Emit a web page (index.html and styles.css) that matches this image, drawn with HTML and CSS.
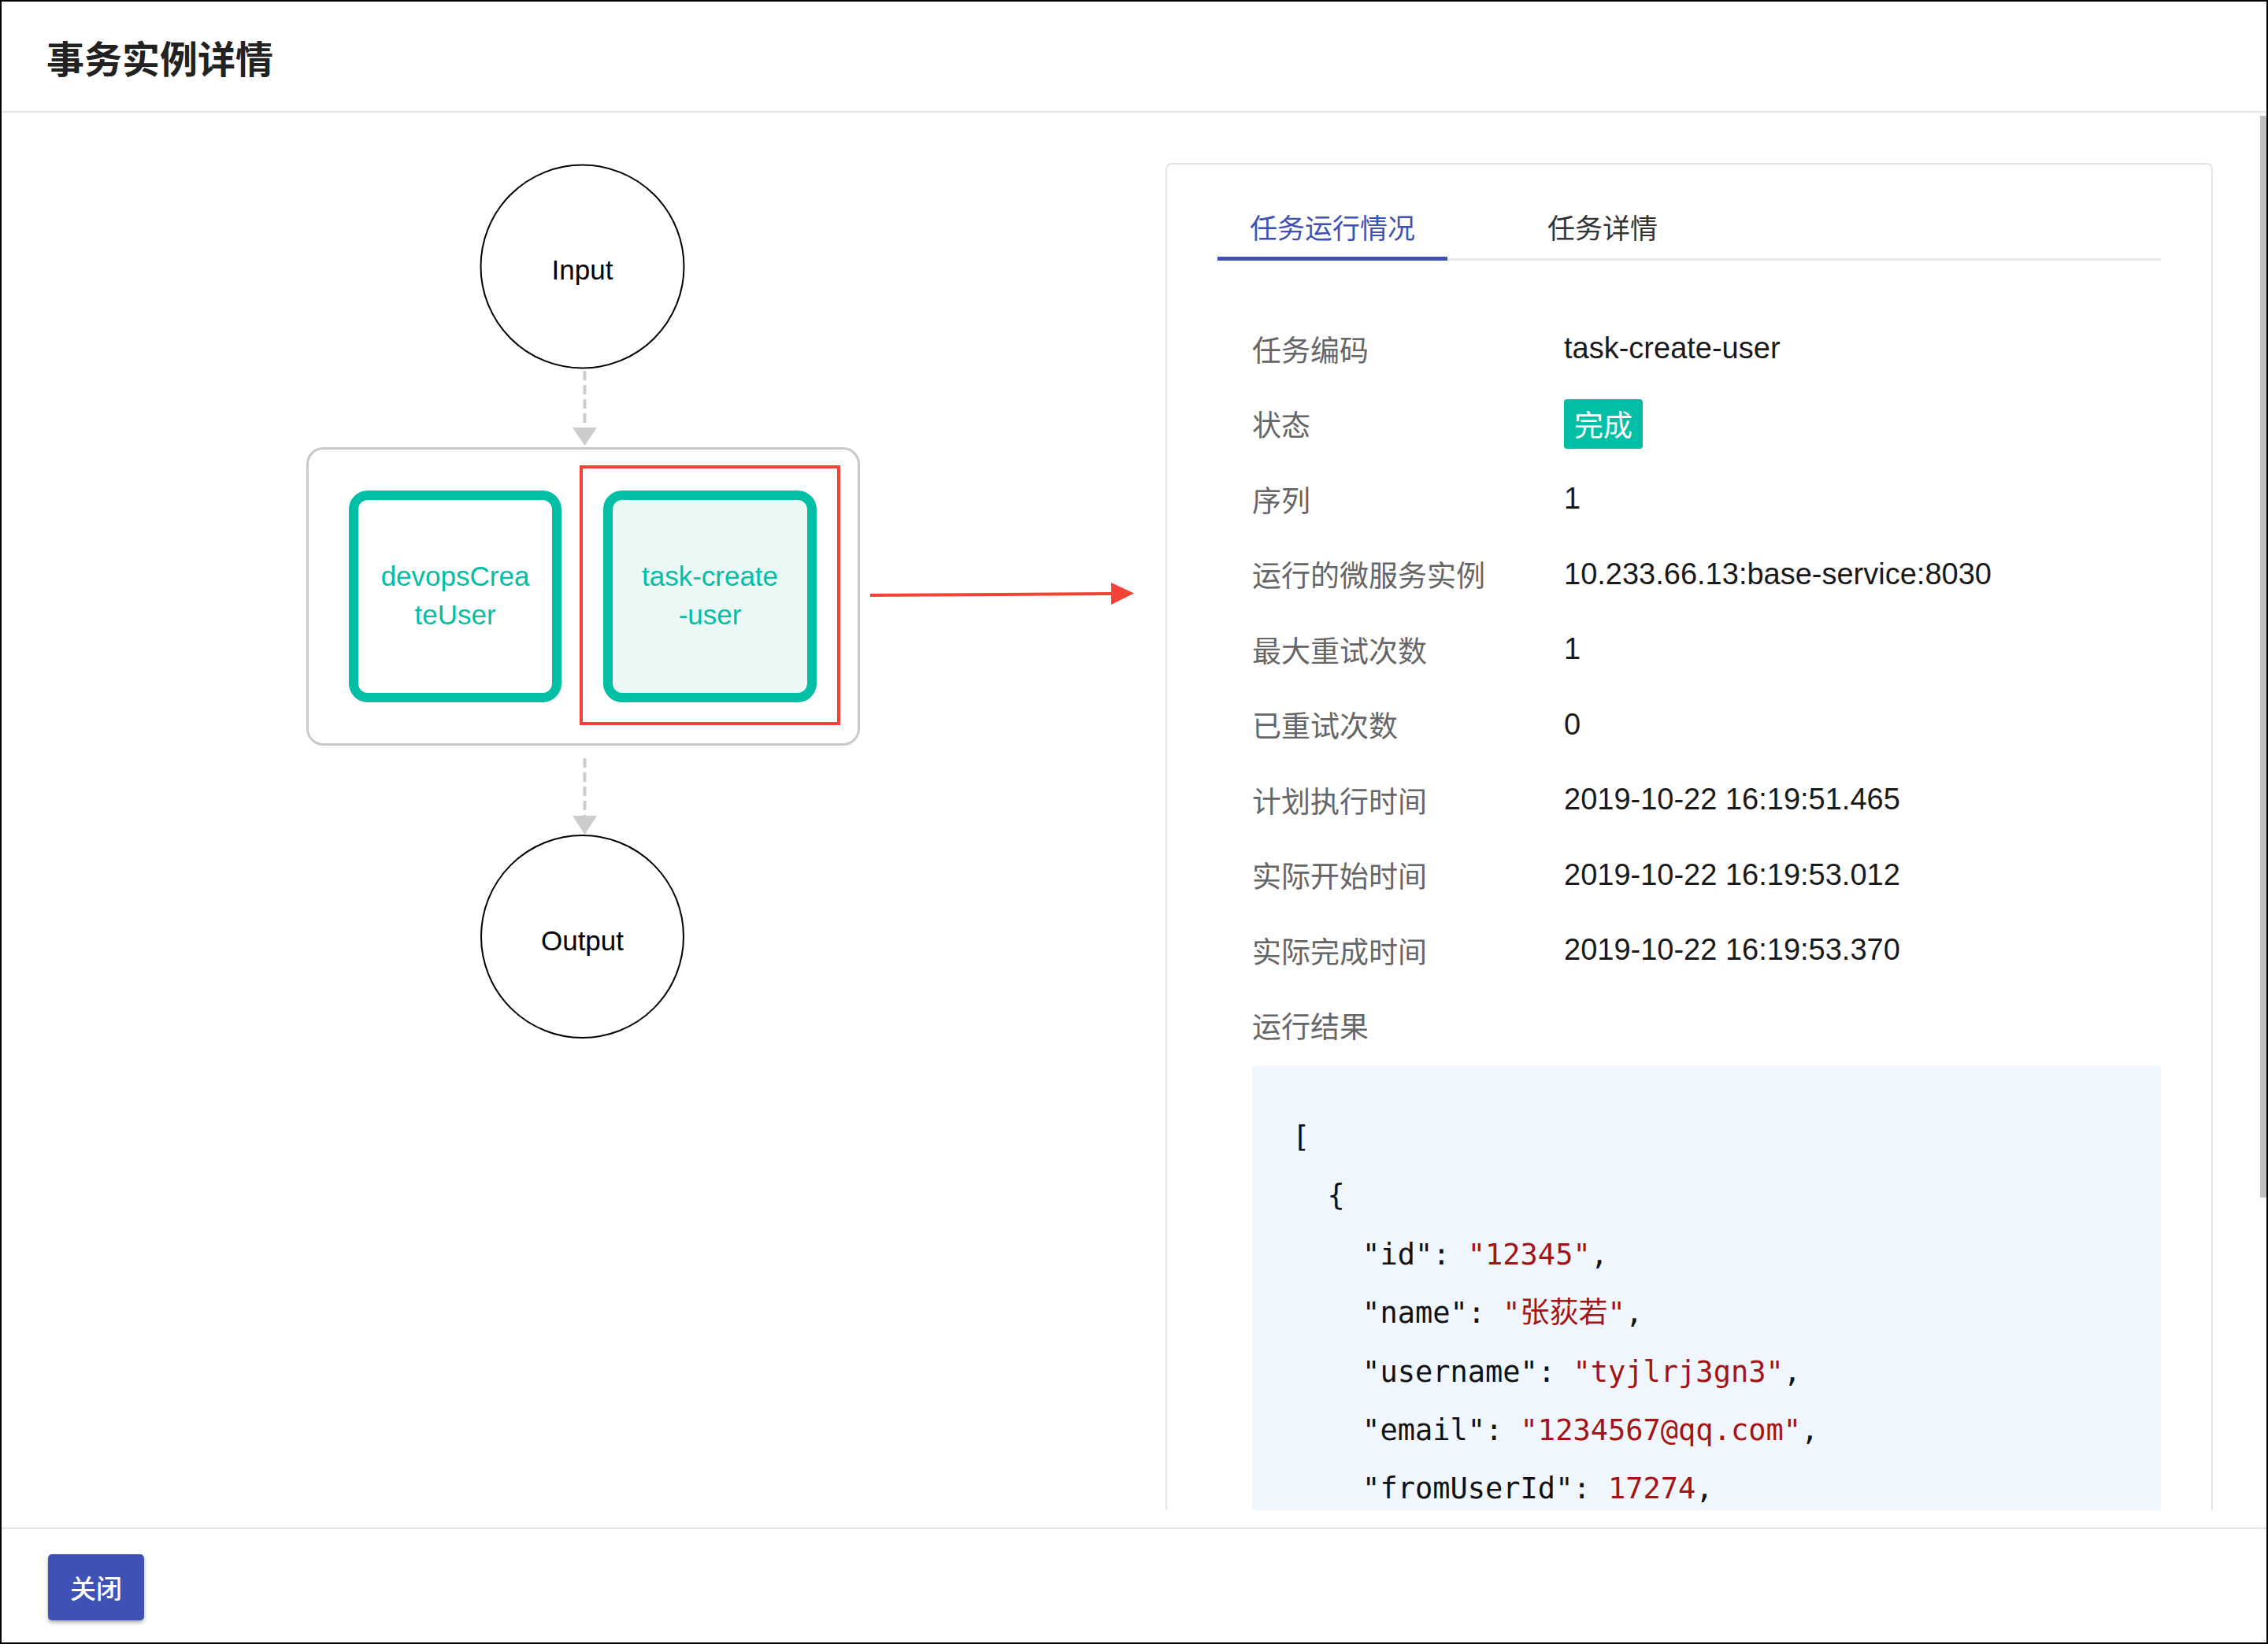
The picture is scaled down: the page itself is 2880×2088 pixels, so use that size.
FILE: index.html
```html
<!DOCTYPE html>
<html lang="zh-CN">
<head>
<meta charset="utf-8">
<title>事务实例详情</title>
<link rel="stylesheet" href="styles.css">
</head>
<body>
<div class="modal">
  <header class="modal-header">
    <h1 class="modal-title">事务实例详情</h1>
  </header>
  <div class="modal-body">
    <div class="viewport">
      <section class="diagram-pane">
        <svg class="diagram" viewBox="2 143 1478 1200" width="1478" height="1200" xmlns="http://www.w3.org/2000/svg">
          <circle cx="739.5" cy="338.5" r="129" fill="#fff" stroke="#000" stroke-width="2"/>
          <text class="io-label" x="739.5" y="355">Input</text>
          <line x1="742.5" y1="471" x2="742.5" y2="544" stroke="#cccccc" stroke-width="4" stroke-dasharray="12 6"/>
          <polygon points="727,543 758,543 742.5,566" fill="#cccccc"/>

          <rect x="390.5" y="569.5" width="700" height="376" rx="20" fill="#fff" stroke="#c9c9c9" stroke-width="3"/>

          <rect x="449" y="629" width="258" height="257" rx="18" fill="#fff" stroke="#00bfa5" stroke-width="12"/>
          <text class="task-label" x="578" y="744">devopsCrea</text>
          <text class="task-label" x="578" y="793">teUser</text>

          <rect x="772" y="629" width="259" height="257" rx="18" fill="#ebf8f5" stroke="#00bfa5" stroke-width="12"/>
          <text class="task-label" x="901.5" y="744">task-create</text>
          <text class="task-label" x="901.5" y="793">-user</text>

          <rect x="738" y="593" width="327" height="326" fill="none" stroke="#f44336" stroke-width="4"/>
          <line x1="1105" y1="756" x2="1414" y2="754" stroke="#f44336" stroke-width="4"/>
          <polygon points="1411,740 1411,768 1440,753.5" fill="#f44336"/>

          <line x1="742.5" y1="963" x2="742.5" y2="1038" stroke="#cccccc" stroke-width="4" stroke-dasharray="12 6"/>
          <polygon points="727,1036 758,1036 742.5,1060" fill="#cccccc"/>
          <circle cx="739.5" cy="1189.5" r="128.5" fill="#fff" stroke="#000" stroke-width="2"/>
          <text class="io-label" x="739.5" y="1207">Output</text>
        </svg>
      </section>

      <section class="task-card">
        <nav class="tabs">
          <div class="tab active">任务运行情况</div>
          <div class="tab">任务详情</div>
        </nav>
        <div class="tab-panel">
          <dl class="info">
            <div class="row"><dt>任务编码</dt><dd>task-create-user</dd></div>
            <div class="row"><dt>状态</dt><dd><span class="badge">完成</span></dd></div>
            <div class="row"><dt>序列</dt><dd>1</dd></div>
            <div class="row"><dt>运行的微服务实例</dt><dd>10.233.66.13:base-service:8030</dd></div>
            <div class="row"><dt>最大重试次数</dt><dd>1</dd></div>
            <div class="row"><dt>已重试次数</dt><dd>0</dd></div>
            <div class="row"><dt>计划执行时间</dt><dd>2019-10-22 16:19:51.465</dd></div>
            <div class="row"><dt>实际开始时间</dt><dd>2019-10-22 16:19:53.012</dd></div>
            <div class="row"><dt>实际完成时间</dt><dd>2019-10-22 16:19:53.370</dd></div>
            <div class="row"><dt>运行结果</dt><dd></dd></div>
          </dl>
<pre class="code">[
  {
    "id": <span class="str">"12345"</span>,
    "name": <span class="str">"张荻若"</span>,
    "username": <span class="str">"tyjlrj3gn3"</span>,
    "email": <span class="str">"1234567@qq.com"</span>,
    "fromUserId": <span class="str">17274</span>,</pre>
        </div>
      </section>
    </div>
    <div class="scroll-thumb"></div>
  </div>
  <footer class="modal-footer">
    <button class="btn-primary" type="button">关闭</button>
  </footer>
</div>
</body>
</html>
```

FILE: styles.css
```css
* {
  box-sizing: border-box;
}

html,
body {
  margin: 0;
  padding: 0;
}

body {
  width: 2880px;
  height: 2088px;
  background: #ffffff;
  font-family: "Noto Sans CJK SC", "Liberation Sans", sans-serif;
  overflow: hidden;
}

.modal {
  width: 2880px;
  height: 2088px;
  border: 2px solid #000000;
  display: flex;
  flex-direction: column;
}

.modal-header {
  flex: none;
  height: 141px;
  border-bottom: 2px solid #e3e3e3;
  display: flex;
  align-items: center;
  padding-left: 57px;
}

.modal-title {
  margin: 0;
  font-size: 48px;
  font-weight: 700;
  line-height: 1;
  color: #222222;
}

.modal-body {
  flex: 1;
  min-height: 0;
  position: relative;
}

.viewport {
  height: 1775px;
  overflow: hidden;
  display: flex;
  align-items: flex-start;
}

.diagram-pane {
  flex: none;
  width: 1478px;
}

.diagram {
  display: block;
}

.io-label {
  font-family: "Liberation Sans", sans-serif;
  font-size: 35px;
  fill: #000000;
  text-anchor: middle;
}

.task-label {
  font-family: "Liberation Sans", sans-serif;
  font-size: 35px;
  fill: #00bfa5;
  text-anchor: middle;
}

.task-card {
  flex: none;
  width: 1330px;
  min-height: 2000px;
  margin-top: 64px;
  border: 2px solid #e4e4e4;
  border-radius: 8px;
  padding: 38px 64px 0 64px;
}

.tabs {
  display: flex;
  gap: 86px;
  border-bottom: 3px solid #e8e8e8;
}

.tab {
  position: relative;
  padding: 0 41px;
  font-size: 35px;
  line-height: 81px;
  color: #333333;
}

.tab.active {
  color: #3f51b5;
}

.tab.active::after {
  content: "";
  position: absolute;
  left: 0;
  right: 0;
  bottom: -3px;
  height: 5px;
  background: #3f51b5;
}

.tab-panel {
  padding: 64px 0 0 44px;
}

.info {
  margin: 0;
}

.row {
  display: grid;
  grid-template-columns: 396px 1fr;
  align-items: center;
  height: 95.5px;
}

.row dt {
  font-size: 37px;
  color: #666666;
}

.row dd {
  margin: 0;
  font-family: "Liberation Sans", "Noto Sans CJK SC", sans-serif;
  font-size: 38px;
  color: #1a1a1a;
}

.badge {
  display: inline-block;
  height: 63px;
  padding: 0 13px;
  border-radius: 4px;
  background: #00bfa5;
  color: #ffffff;
  font-family: "Noto Sans CJK SC", sans-serif;
  font-size: 37px;
  line-height: 63px;
  vertical-align: middle;
}

.code {
  margin: 4px 0 0 0;
  padding: 54px 40px 54px 51px;
  background: #eff6fd;
  font-family: "DejaVu Sans Mono", "Noto Sans CJK SC", monospace;
  font-size: 37px;
  line-height: 74.4px;
  color: #111111;
}

.code .str {
  color: #a31515;
}

.scroll-thumb {
  position: absolute;
  top: 4px;
  right: 0;
  width: 8px;
  height: 1374px;
  background: #c1c1c1;
}

.modal-footer {
  flex: none;
  height: 146px;
  border-top: 2px solid #e3e3e3;
  padding: 32px 0 0 59px;
}

.btn-primary {
  width: 122px;
  height: 84px;
  border: none;
  border-radius: 5px;
  background: #3f51b5;
  color: #ffffff;
  font-family: "Noto Sans CJK SC", sans-serif;
  font-size: 33px;
  font-weight: 500;
  box-shadow: 0 3px 5px rgba(0, 0, 0, 0.3);
  padding: 0;
}
```
